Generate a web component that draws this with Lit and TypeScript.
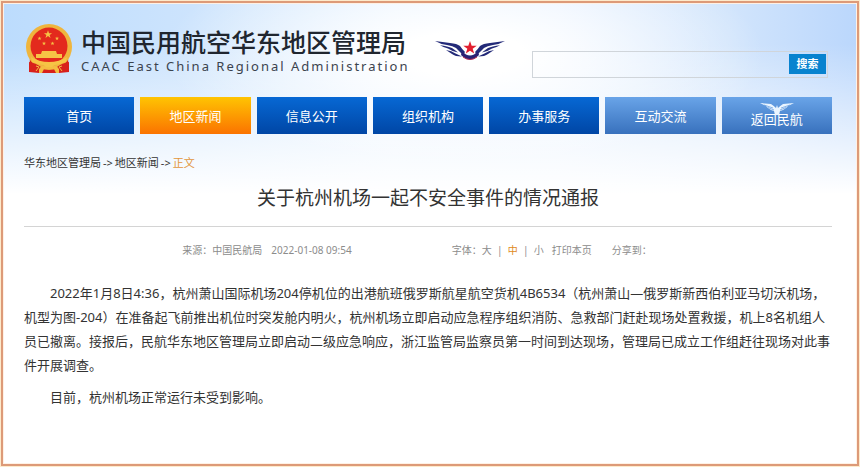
import { LitElement, html, css, svg } from "lit";
import { customElement, state } from "lit/decorators.js";
import { classMap } from "lit/directives/class-map.js";

type NavItem = { label: string; kind?: "active" | "light"; bird?: boolean };

const NAV: NavItem[] = [
  { label: "首页" },
  { label: "地区新闻", kind: "active" },
  { label: "信息公开" },
  { label: "组织机构" },
  { label: "办事服务" },
  { label: "互动交流", kind: "light" },
  { label: "返回民航", kind: "light", bird: true },
];

const STAR = "M0 -5L1.2 -1.6L4.8 -1.6L1.9 0.6L3 4L0 1.9L-3 4L-1.9 0.6L-4.8 -1.6L-1.2 -1.6Z";

const halfWing = svg`
  <path d="M0 1L15 3Q22 3.5 25 6Q27 9 30 12L28 15Q24 11 21 8Q18 6 12 5Q5 4 0 1Z"/>
  <path d="M5 5.2Q13 6.2 17 8Q20 10 23 12.6Q17 11.5 13 8.6Q9 7.5 5 5.2Z"/>
  <path d="M11 10Q17 11 20 13.2L27 16.5Q20 16.5 17 14Q14 12 11 10Z"/>`;

@customElement("app-root")
export class AppRoot extends LitElement {
  static styles = css`
    :host {
      display: block;
      min-height: 100vh;
      box-sizing: border-box;
      padding: 1px;
      background: #fdeacb;
      color: #333;
      font-family: "Noto Sans", "Noto Sans CJK SC", sans-serif;
    }
    .frame {
      box-sizing: border-box;
      min-height: calc(100vh - 2px);
      border: 2px solid #dd9a78;
      padding: 1px;
      background: #fff1e4;
    }
    .page {
      box-sizing: border-box;
      min-height: calc(100vh - 8px);
      padding: 20px 24px 24px 20px;
      background:
        radial-gradient(ellipse 300px 110px at 54% 50px, #fff 20%, #fff0 100%) no-repeat,
        linear-gradient(#fff0 40px, #fff 190px) no-repeat,
        linear-gradient(90deg, #bcdcfd 0, #cde4fd 22%, #e4f1fe 45%, #e4f0fe 65%, #d2e5fc 85%, #bbd7fc 100%);
      background-color: #fff;
    }
    header {
      display: flex;
      align-items: flex-start;
    }
    .emblem {
      flex: none;
      width: 50px;
      height: 50px;
    }
    .name {
      margin: 5px 0 0 7px;
      white-space: nowrap;
      color: #20262f;
    }
    .name-zh {
      margin: 0;
      font-family: "Liberation Sans", "Noto Sans CJK SC", sans-serif;
      font-size: 25px;
      line-height: 29px;
      font-weight: 500;
    }
    .name-en {
      margin: 0;
      font-size: 13px;
      line-height: 16px;
      letter-spacing: 2px;
      color: #3b434e;
    }
    .wings {
      flex: none;
      width: 70px;
      height: 22px;
      margin: 16px 0 0 26px;
    }
    .search {
      box-sizing: border-box;
      display: flex;
      flex: 0 1 296px;
      height: 27px;
      margin: 27px 4px 0 auto;
      padding: 2px 1px 3px 0;
      border: 1px solid #d0d5da;
    }
    .search input {
      flex: 1;
      min-width: 0;
      border: 0;
      padding: 0 6px;
      background: transparent;
      font: inherit;
      font-size: 12px;
    }
    .search button {
      flex: none;
      width: 37px;
      padding: 0;
      border: 0;
      background: #0883cf;
      color: #fff;
      font: inherit;
      font-size: 11px;
      line-height: 18px;
      font-weight: 700;
    }
    nav {
      display: grid;
      grid-template-columns: repeat(7, 1fr);
      gap: 6px;
      margin-top: 19px;
    }
    .tab {
      display: flex;
      align-items: center;
      justify-content: center;
      position: relative;
      height: 37px;
      background: linear-gradient(#0768d4, #0046a5);
      color: #fff;
      font-size: 13px;
      text-decoration: none;
    }
    .tab.active {
      background: linear-gradient(#ffc402, #fb7300);
    }
    .tab.light {
      background: linear-gradient(#69a4e8, #3871bd);
    }
    .tab.bird {
      box-sizing: border-box;
      padding-top: 5px;
    }
    .tab svg {
      position: absolute;
      top: 5px;
      left: 50%;
      width: 34px;
      height: 13px;
      margin-left: -17px;
    }
    .crumbs {
      display: flex;
      gap: 2px;
      margin-top: 20px;
      font-size: 11px;
      line-height: 18px;
    }
    .crumbs a {
      color: inherit;
      text-decoration: none;
    }
    .crumbs .here {
      color: #e2963c;
    }
    .title {
      margin: 10px 0 0;
      padding-bottom: 12px;
      border-bottom: 1px solid #d4d4d4;
      text-align: center;
      font-size: 19px;
      line-height: 32px;
      font-weight: 400;
    }
    .meta {
      display: flex;
      justify-content: center;
      gap: 100px;
      margin-top: 15px;
      padding-right: 22px;
      font-size: 10px;
      line-height: 16px;
      color: #8c8c8c;
      white-space: nowrap;
    }
    .group {
      display: flex;
    }
    .date {
      margin-left: 9px;
    }
    .meta button {
      padding: 0;
      border: 0;
      background: none;
      color: inherit;
      font: inherit;
    }
    .meta button.chosen {
      color: #e08a1c;
    }
    .bar {
      width: 16px;
      text-align: center;
    }
    .meta .print {
      margin: 0 20px 0 8px;
    }
    .article {
      margin-top: 23px;
      font-size: 13px;
      line-height: 24px;
    }
    .article p {
      margin: 0 0 8px;
      text-indent: 2em;
    }
  `;

  @state() private size = "中";

  private sizeButton(s: string) {
    return html`<button
      type="button"
      class=${classMap({ chosen: this.size === s })}
      @click=${() => (this.size = s)}
    >${s}</button>`;
  }

  private emblem() {
    return html`<svg class="emblem" viewBox="0 0 50 50" role="img" aria-label="国徽">
      <path d="M6 34L5 48L14 47L18 49H32L36 47L45 48L44 34Z" fill="#d8201b" />
      <circle cx="25" cy="23" r="23" fill="#efb53d" />
      <circle cx="25" cy="22" r="18.5" fill="#e32a1d" />
      <g fill="#f6c445">
        <path transform="translate(24 10.5) scale(.85)" d=${STAR} />
        <path transform="translate(15.5 14.5) scale(.42)" d=${STAR} />
        <path transform="translate(33 14.5) scale(.42)" d=${STAR} />
        <path transform="translate(20 19.5) scale(.42)" d=${STAR} />
        <path transform="translate(28.5 19.5) scale(.42)" d=${STAR} />
        <path d="M18 27H32L33 30H38V34H12V30H17Z" />
        <path d="M7 33Q15 38 25 38Q35 38 43 33L42 38Q34 41 30 41L28 44H22L20 41Q16 41 8 38Z" />
      </g>
      <path d="M11 34H39Q35 37 31 37Q25 33 19 37Q15 37 11 34Z" fill="#e32a1d" />
      <path d="M5 38Q12 39 17 43L15 49L5 48Z M45 38Q38 39 33 43L35 49L45 48Z" fill="#d8201b" />
      <path d="M15 45Q18 40 22 43H28Q32 40 35 45V49H32L30 45H20L18 49H15Z" fill="#f4bd42" />
      <path d="M12 42L15 43L12 47M38 42L35 43L38 47" fill="none" stroke="#f4bd42" />
    </svg>`;
  }

  render() {
    return html`<div class="frame">
      <div class="page">
        <header>
          ${this.emblem()}
          <div class="name">
            <p class="name-zh">中国民用航空华东地区管理局</p>
            <p class="name-en">CAAC East China Regional Administration</p>
          </div>
          <svg class="wings" viewBox="0 0 70 22" role="img" aria-label="中国民航">
            <g fill="#232a78">
              ${halfWing}
              <g transform="translate(70 0) scale(-1 1)">${halfWing}</g>
            </g>
            <path d="M27 11Q35 20 43 11L44 15Q35 24 26 15Z" fill="#2a2074" />
            <path d="M28 17Q35 22 42 17" fill="none" stroke="#b8284f" stroke-width="1" />
            <path transform="translate(35 8) scale(1.4)" d=${STAR} fill="#e21f2f" />
          </svg>
          <form class="search" @submit=${(e: Event) => e.preventDefault()}>
            <input type="text" aria-label="搜索" />
            <button type="submit">搜索</button>
          </form>
        </header>
        <nav>
          ${NAV.map(
            (n) => html`<a
              href="#"
              class=${classMap({
                tab: true,
                active: n.kind === "active",
                light: n.kind === "light",
                bird: !!n.bird,
              })}
              >${n.bird
                ? html`<svg viewBox="0 0 34 13" fill="#eaf5ff" aria-hidden="true">
                    <path d="M0 1L11 2Q14 4 16 6L17 3L18 6Q20 4 23 2L34 1L28 4L26 6L23 8L20 9L19 13H15L14 9L11 8L8 6L6 4Z" />
                    <path d="M4 3L13 6M8 5.5L14 8M30 3L21 6M26 5.5L20 8" stroke="#5f98dc" stroke-width=".7" />
                  </svg>`
                : null}${n.label}</a
            >`
          )}
        </nav>
        <div class="crumbs">
          <a href="#">华东地区管理局</a><span>-&gt;</span><a href="#">地区新闻</a><span>-&gt;</span
          ><a href="#" class="here">正文</a>
        </div>
        <main>
          <h1 class="title">关于杭州机场一起不安全事件的情况通报</h1>
          <div class="meta">
            <div class="group">
              <span>来源：中国民航局</span><time class="date" datetime="2022-01-08T09:54">2022-01-08 09:54</time>
            </div>
            <div class="group">
              <span>字体：</span>${this.sizeButton("大")}<span class="bar">|</span>${this.sizeButton("中")}<span
                class="bar"
                >|</span
              >${this.sizeButton("小")}<button type="button" class="print">打印本页</button><span>分享到：</span>
            </div>
          </div>
          <article class="article">
            <p>2022年1月8日4:36，杭州萧山国际机场204停机位的出港航班俄罗斯航星航空货机4B6534（杭州萧山—俄罗斯新西伯利亚马切沃机场，机型为图-204）在准备起飞前推出机位时突发舱内明火，杭州机场立即启动应急程序组织消防、急救部门赶赴现场处置救援，机上8名机组人员已撤离。接报后，民航华东地区管理局立即启动二级应急响应，浙江监管局监察员第一时间到达现场，管理局已成立工作组赶往现场对此事件开展调查。</p>
            <p>目前，杭州机场正常运行未受到影响。</p>
          </article>
        </main>
      </div>
    </div>`;
  }
}
